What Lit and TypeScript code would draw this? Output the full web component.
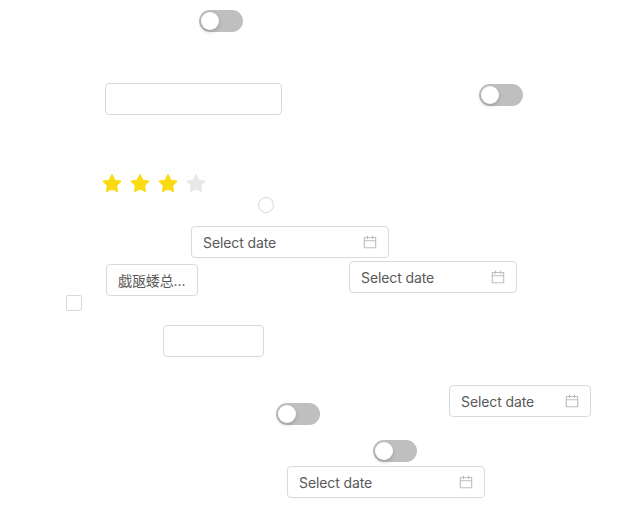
import { LitElement, html, css } from "lit";
import { customElement, property } from "lit/decorators.js";
import { styleMap } from "lit/directives/style-map.js";

@customElement("ui-switch")
class UiSwitch extends LitElement {
  static styles = css`
    :host { display: block; }
    .track { box-sizing: border-box; width: 44px; height: 22px; padding: 2px; border-radius: 11px; background: #bfbfbf; }
    .knob { width: 18px; height: 18px; border-radius: 50%; background: #fff; box-shadow: 0 2px 4px rgba(0, 35, 11, 0.2); }
  `;
  render() {
    return html`<div class="track" role="switch" aria-checked="false"><div class="knob"></div></div>`;
  }
}

@customElement("ui-field")
class UiField extends LitElement {
  @property() text = "";
  @property({ type: Boolean }) calendar = false;
  static styles = css`
    :host { display: block; }
    .field { box-sizing: border-box; width: 100%; height: 32px; display: flex; align-items: center; justify-content: space-between; padding: 0 11px; border: 1px solid #d9d9d9; border-radius: 4px; background: #fff; }
    .text { padding-top: 2px; color: #595959; font: 14px/22px Inter, "Noto Sans CJK SC", sans-serif; letter-spacing: -0.1px; white-space: nowrap; }
    .icon { display: block; flex: none; width: 14px; height: 14px; fill: #bfbfbf; }
  `;
  render() {
    return html`<div class="field">
      <span class="text">${this.text}</span>
      ${this.calendar
        ? html`<svg class="icon" viewBox="64 64 896 896"><path d="M880 184H712v-64c0-4.400-3.600-8-8-8h-56c-4.400 0-8 3.600-8 8v64H384v-64c0-4.400-3.600-8-8-8h-56c-4.400 0-8 3.600-8 8v64H144c-17.700 0-32 14.300-32 32v664c0 17.700 14.300 32 32 32h736c17.700 0 32-14.300 32-32V216c0-17.700-14.300-32-32-32zm-40 656H184V460h656v380zM184 392V256h128v48c0 4.400 3.600 8 8 8h56c4.400 0 8-3.600 8-8v-48h256v48c0 4.400 3.600 8 8 8h56c4.400 0 8-3.600 8-8v-48h128v136H184z"/></svg>`
        : ""}
    </div>`;
  }
}

@customElement("ui-rate")
class UiRate extends LitElement {
  @property({ type: Number }) value = 0;
  static styles = css`
    :host { display: block; }
    .stars { display: flex; gap: 8px; }
    .star { display: block; width: 20px; height: 20px; fill: #e8e8e8; }
    .star.full { fill: #fadb14; }
  `;
  render() {
    return html`<div class="stars">
      ${[1, 2, 3, 4].map(
        (n) => html`<svg class=${n <= this.value ? "star full" : "star"} viewBox="64 64 896 896"><path d="M908.100 353.100l-253.900-36.900L540.700 86.100c-3.100-6.300-8.200-11.400-14.500-14.500-15.800-7.800-35-1.300-42.900 14.500L369.800 316.200l-253.900 36.900c-7 1-13.400 4.300-18.300 9.300a32.050 32.050 0 0 0 .6 45.300l183.700 179.100-43.400 252.900a31.950 31.950 0 0 0 46.400 33.700L512 754l227.100 119.400c6.200 3.300 13.400 4.400 20.300 3.200 17.400-3 29.100-19.500 26.100-36.900l-43.400-252.900 183.700-179.100c5-4.900 8.300-11.300 9.300-18.300 2.700-17.500-9.500-33.700-27-36.300z"/></svg>`
      )}
    </div>`;
  }
}

interface Placed {
  kind: "switch" | "input" | "date" | "select" | "rate" | "radio" | "checkbox";
  x: number;
  y: number;
  w?: number;
}

const items: Placed[] = [
  { kind: "switch", x: 199, y: 10 },
  { kind: "input", x: 105, y: 83, w: 177 },
  { kind: "switch", x: 479, y: 84 },
  { kind: "rate", x: 102, y: 174 },
  { kind: "radio", x: 258, y: 197 },
  { kind: "date", x: 191, y: 226, w: 198 },
  { kind: "date", x: 349, y: 261, w: 168 },
  { kind: "select", x: 106, y: 264, w: 92 },
  { kind: "checkbox", x: 66, y: 295 },
  { kind: "input", x: 163, y: 325, w: 101 },
  { kind: "date", x: 449, y: 385, w: 142 },
  { kind: "switch", x: 276, y: 403 },
  { kind: "switch", x: 373, y: 440 },
  { kind: "date", x: 287, y: 466, w: 198 },
];

@customElement("app-root")
class AppRoot extends LitElement {
  static styles = css`
    :host { display: block; height: 506px; background: #fff; }
    .canvas { position: relative; width: 619px; height: 506px; overflow: hidden; }
    .item { position: absolute; }
    .mark { box-sizing: border-box; width: 16px; height: 16px; border: 1px solid #d9d9d9; background: #fff; }
    .radio { border-radius: 50%; }
    .checkbox { border-radius: 2px; }
  `;
  private control(kind: Placed["kind"]) {
    switch (kind) {
      case "switch": return html`<ui-switch></ui-switch>`;
      case "input": return html`<ui-field></ui-field>`;
      case "date": return html`<ui-field text="Select date" calendar></ui-field>`;
      case "select": return html`<ui-field text="戯瓪蜲总..."></ui-field>`;
      case "rate": return html`<ui-rate value="3"></ui-rate>`;
      default: return html`<div class="mark ${kind}"></div>`;
    }
  }
  render() {
    return html`<div class="canvas">
      ${items.map(
        (i) => html`<div class="item" style=${styleMap({ left: `${i.x}px`, top: `${i.y}px`, width: i.w ? `${i.w}px` : "auto" })}>${this.control(i.kind)}</div>`
      )}
    </div>`;
  }
}
